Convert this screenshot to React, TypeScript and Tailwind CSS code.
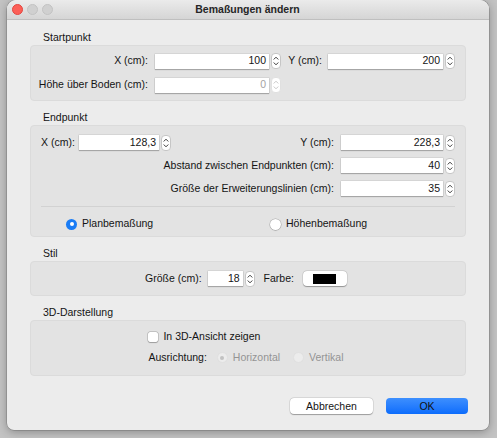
import React from 'react';

const font = { fontFamily: '"Liberation Sans", Arial, sans-serif' };

const Spinner = ({ disabled = false }: { disabled?: boolean }) => (
	<div
		className={`w-[10px] h-[16px] rounded-[4px] bg-white border flex flex-col items-center justify-center ${
			disabled ? 'border-[#e0e0e0]' : 'border-[#c6c6c6]'
		}`}>
		<svg width="6" height="12" viewBox="0 0 6 12" fill="none">
			<path
				d="M1 4.2L3 2.2L5 4.2M1 7.8L3 9.8L5 7.8"
				stroke={disabled ? '#c8c8c8' : '#3a3a3a'}
				strokeWidth="1"
				strokeLinecap="round"
				strokeLinejoin="round"
			/>
		</svg>
	</div>
);

const Field = ({
	value,
	width,
	disabled = false,
}: {
	value: string;
	width: string;
	disabled?: boolean;
}) => (
	<div className={`flex items-center ${width}`}>
		<div
			className={`flex-1 h-[15px] bg-white flex items-center justify-end pr-[3px] shadow-[0_1px_1px_rgba(0,0,0,0.22),0_0_0_0.5px_rgba(0,0,0,0.12)] ${
				disabled ? 'text-[#a3a3a3]' : 'text-[#141414]'
			}`}>
			{value}
		</div>
		<div className="ml-[2px]">
			<Spinner disabled={disabled} />
		</div>
	</div>
);

const Section = ({ title, children, className }: { title: string; children: React.ReactNode; className: string }) => (
	<div className="flex flex-col">
		<div className="h-[15px] leading-[15px] pl-[13px]">{title}</div>
		<div className={`bg-[#e3e3e3] border border-[#dbdbdb] rounded-[4px] ${className}`}>{children}</div>
	</div>
);

const Radio = ({ checked = false, disabled = false }: { checked?: boolean; disabled?: boolean }) => {
	if (checked && !disabled)
		return (
			<div className="w-[11px] h-[11px] rounded-full bg-[#1a7cf5] flex items-center justify-center">
				<div className="w-[4px] h-[4px] rounded-full bg-white" />
			</div>
		);
	return (
		<div
			className={`w-[11px] h-[11px] rounded-full flex items-center justify-center ${
				disabled ? 'bg-[#ececec] border border-[#e0e0e0]' : 'bg-white shadow-[0_0_0_0.5px_rgba(0,0,0,0.25),0_0.5px_1px_rgba(0,0,0,0.2)]'
			}`}>
			{checked && <div className="w-[4px] h-[4px] rounded-full bg-[#c2c2c2]" />}
		</div>
	);
};

const App = () => {
	return (
		<div className="w-[497px] h-[438px] bg-[#c3c3c3] text-[10.5px] text-[#141414]" style={font}>
			<div className="ml-[7px] w-[482px] h-[430px] bg-[#ececec] rounded-t-[9px] rounded-b-[7px] shadow-[0_2px_10px_rgba(0,0,0,0.3),0_0_0_0.5px_rgba(0,0,0,0.25)] flex flex-col overflow-hidden">
				{/* title bar */}
				<div className="h-[20px] flex items-center relative bg-gradient-to-b from-[#ebebeb] to-[#d5d5d5] border-b border-[#bfbfbf]">
					<div className="flex items-center gap-[4px] pl-[5px]">
						<div className="w-[11px] h-[11px] rounded-full bg-[#fc5f57] border border-[#e2463f]" />
						<div className="w-[11px] h-[11px] rounded-full bg-[#d0d0d0] border border-[#c2c2c2]" />
						<div className="w-[11px] h-[11px] rounded-full bg-[#d0d0d0] border border-[#c2c2c2]" />
					</div>
					<div className="flex-1 text-center font-bold text-[10.5px] text-[#262626] -ml-[47px]">
						Bemaßungen ändern
					</div>
				</div>

				<div className="flex flex-col px-[23px] pt-[10px] gap-[9px]">
					<Section title="Startpunkt" className="h-[56px] flex flex-col justify-center gap-[9px]">
						<div className="flex items-center h-[15px]">
							<div className="w-[117px] text-right">X (cm):</div>
							<div className="ml-[7px]">
								<Field value="100" width="w-[126px]" />
							</div>
							<div className="w-[41px] text-right">Y (cm):</div>
							<div className="ml-[6px]">
								<Field value="200" width="w-[127px]" />
							</div>
						</div>
						<div className="flex items-center h-[15px]">
							<div className="w-[117px] text-right">Höhe über Boden (cm):</div>
							<div className="ml-[7px]">
								<Field value="0" width="w-[126px]" disabled />
							</div>
						</div>
					</Section>

					<Section title="Endpunkt" className="h-[112px] flex flex-col px-[10px] pt-[9px]">
						<div className="flex items-center h-[15px]">
							<div className="w-[38px]">X (cm):</div>
							<Field value="128,3" width="w-[92px]" />
							<div className="flex-1 text-right pr-[7px]">Y (cm):</div>
							<Field value="228,3" width="w-[114px]" />
						</div>
						<div className="flex items-center h-[15px] mt-[8px]">
							<div className="flex-1 text-right pr-[7px]">Abstand zwischen Endpunkten (cm):</div>
							<Field value="40" width="w-[114px]" />
						</div>
						<div className="flex items-center h-[15px] mt-[8px]">
							<div className="flex-1 text-right pr-[7px]">Größe der Erweiterungslinien (cm):</div>
							<Field value="35" width="w-[114px]" />
						</div>
						<div className="h-px bg-[#d2d2d2] mt-[10px]" />
						<div className="flex items-center h-[16px] mt-[9px]">
							<div className="flex items-center w-[229px] pl-[25px] gap-[5px]">
								<Radio checked />
								<span>Planbemaßung</span>
							</div>
							<div className="flex items-center gap-[5px]">
								<Radio />
								<span>Höhenbemaßung</span>
							</div>
						</div>
					</Section>

					<Section title="Stil" className="h-[35px] flex items-center justify-center pr-[4px]">
						<span>Größe (cm):</span>
						<div className="ml-[6px]">
							<Field value="18" width="w-[47px]" />
						</div>
						<span className="ml-[9px]">Farbe:</span>
						<div className="ml-[9px] w-[44px] h-[15px] bg-white rounded-[4px] shadow-[0_0.5px_1px_rgba(0,0,0,0.3),0_0_0_0.5px_rgba(0,0,0,0.12)] flex items-center justify-center">
							<div className="w-[23px] h-[10px] bg-black" />
						</div>
					</Section>

					<Section title="3D-Darstellung" className="h-[56px] flex justify-center pr-[4px]">
						<div className="flex flex-col pt-[8px] gap-[6px]">
							<div className="flex items-center h-[15px] gap-[5px]">
								<div className="w-[10px] h-[10px] bg-white rounded-[2px] shadow-[0_0_0_0.5px_rgba(0,0,0,0.25),0_0.5px_1px_rgba(0,0,0,0.2)]" />
								<span>In 3D-Ansicht zeigen</span>
							</div>
							<div className="flex items-center h-[15px]">
								<span>Ausrichtung:</span>
								<div className="ml-[10px] flex items-center gap-[5px] text-[#949494]">
									<Radio checked disabled />
									<span>Horizontal</span>
								</div>
								<div className="ml-[13px] flex items-center gap-[5px] text-[#949494]">
									<Radio disabled />
									<span>Vertikal</span>
								</div>
							</div>
						</div>
					</Section>
				</div>

				<div className="flex justify-end gap-[13px] pr-[21px] mt-[22px]">
					<button className="w-[83px] h-[16px] bg-white rounded-[4px] shadow-[0_0.5px_1px_rgba(0,0,0,0.3),0_0_0_0.5px_rgba(0,0,0,0.12)] leading-[16px]">
						Abbrechen
					</button>
					<button className="w-[82px] h-[16px] rounded-[4px] text-[#111] bg-gradient-to-b from-[#3d8ffe] to-[#0a6cfc] leading-[16px]">
						OK
					</button>
				</div>
			</div>
		</div>
	);
};

export default App;
